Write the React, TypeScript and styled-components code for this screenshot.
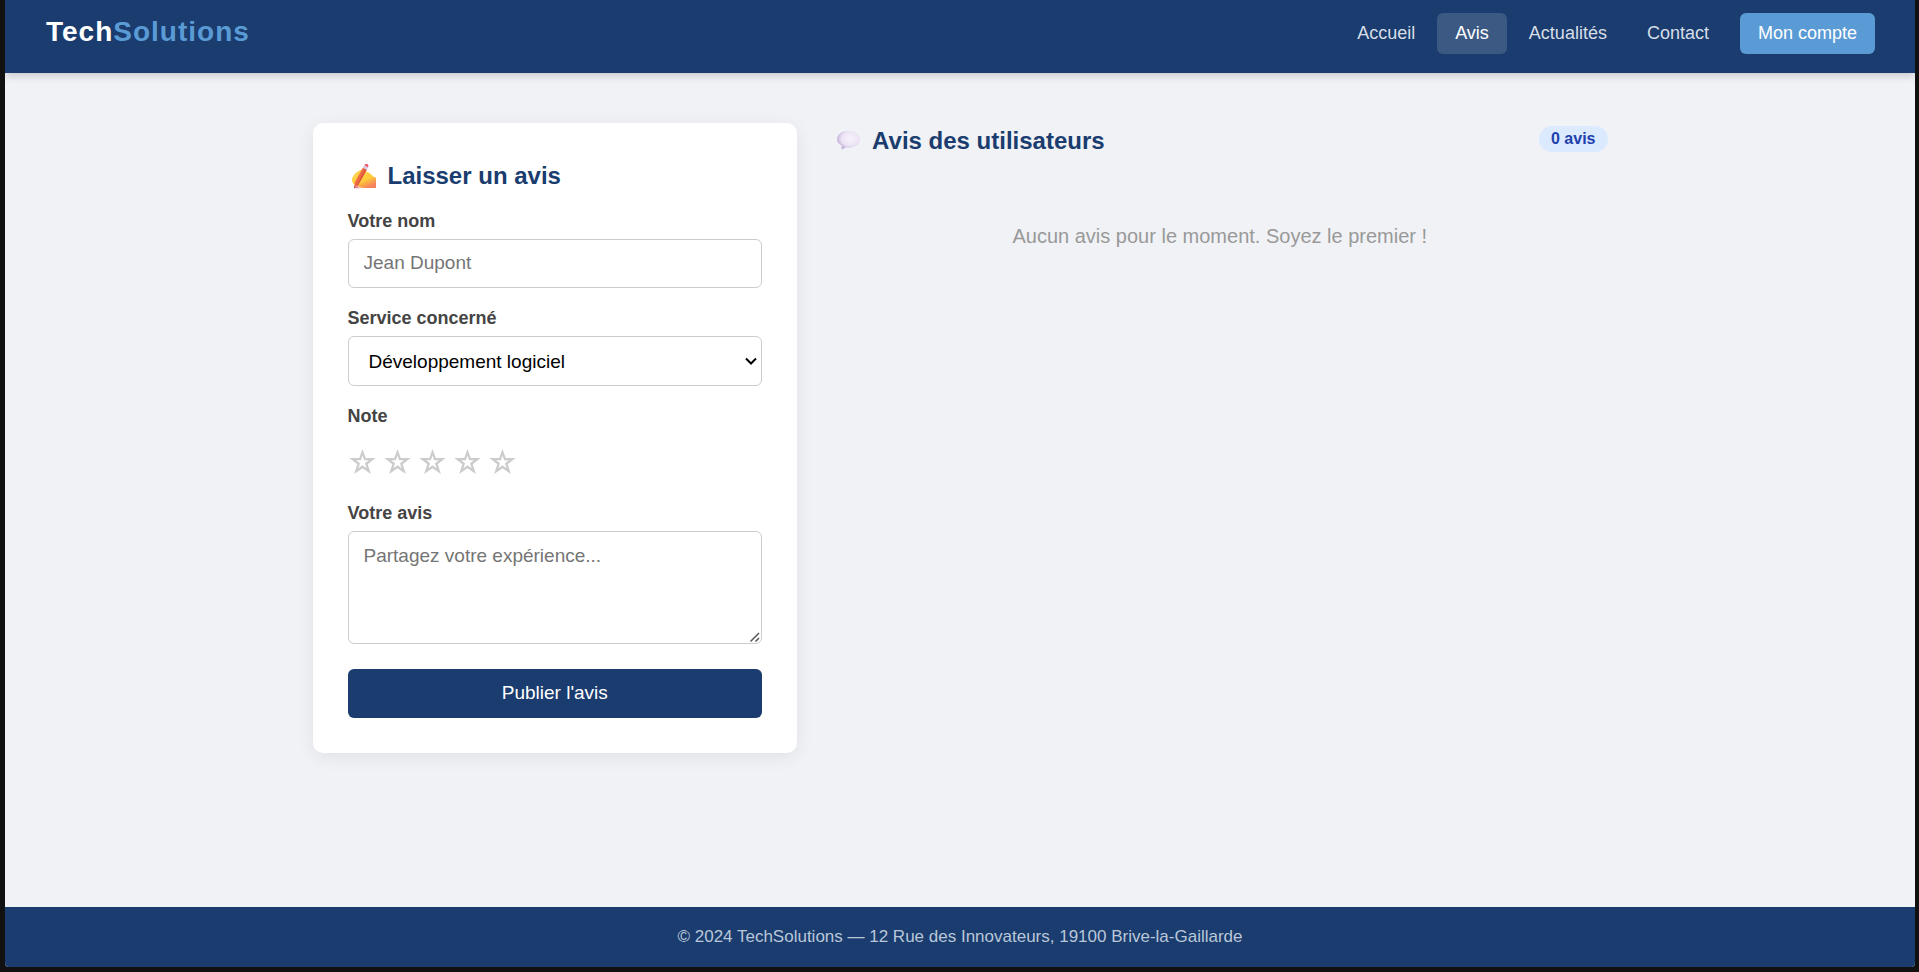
import React, { useState } from "react";
import styled, { createGlobalStyle } from "styled-components";

const navy = "#1a3c6e";
const sky = "#5b9bd5";

const GlobalStyle = createGlobalStyle`
  *, *::before, *::after { box-sizing: border-box; }
  body {
    margin: 0;
    background: #111;
    font-family: Arial, "Liberation Sans", sans-serif;
    color: #333;
  }
`;

const Frame = styled.div`
  display: flex;
  min-height: 100vh;
  padding: 0 4px 5px 5px;
`;

const Page = styled.div`
  flex: 1;
  min-width: 0;
  display: flex;
  flex-direction: column;
  background: #f0f2f6;
  border-radius: 0 0 4px 4px;
  overflow: hidden;
`;

const Header = styled.header`
  display: flex;
  flex-wrap: wrap;
  align-items: flex-start;
  justify-content: space-between;
  padding: 13px 40px 19px 41px;
  background: ${navy};
  box-shadow: 0 2px 9px rgba(0, 0, 0, 0.2);
`;

const Logo = styled.a`
  color: #fff;
  font-size: 28px;
  font-weight: 700;
  line-height: 38px;
  letter-spacing: 1px;
  text-decoration: none;
`;

const LogoAccent = styled.span`
  color: ${sky};
`;

const Nav = styled.nav`
  display: flex;
  flex-wrap: wrap;
  gap: 4px;
`;

const NavLink = styled.a<{ $active?: boolean }>`
  padding: 10px 18px;
  border-radius: 6px;
  background: ${(p) => (p.$active ? "rgba(255, 255, 255, 0.15)" : "transparent")};
  color: ${(p) => (p.$active ? "#fff" : "#d7dee8")};
  font-size: 18px;
  line-height: 21px;
  text-decoration: none;
`;

const AccountLink = styled(NavLink)`
  margin-left: 9px;
  background: ${sky};
  color: #fff;
`;

const Main = styled.main`
  flex: 1;
  display: grid;
  grid-template-columns: minmax(0, 1fr) minmax(0, 1.6fr);
  align-items: start;
  gap: 35px;
  width: 100%;
  max-width: 1365px;
  margin: 0 auto;
  padding: 50px 35px;

  @media (max-width: 900px) {
    grid-template-columns: minmax(0, 1fr);
  }
`;

const Card = styled.section`
  padding: 35px;
  border-radius: 10px;
  background: #fff;
  box-shadow: 0 4px 18px rgba(0, 0, 0, 0.07);
`;

const Title = styled.h2`
  display: flex;
  align-items: center;
  gap: 8px;
  margin: 0;
  color: ${navy};
  font-size: 24px;
  line-height: 35px;
`;

const TitleIcon = styled.svg`
  flex: none;
  width: 32px;
  height: 32px;
`;

const Form = styled.form`
  display: flex;
  flex-direction: column;
  gap: 20px;
  margin-top: 18px;
`;

const Field = styled.div`
  display: flex;
  flex-direction: column;
  gap: 7px;
`;

const Label = styled.label`
  color: #444;
  font-size: 18px;
  font-weight: 700;
  line-height: 21px;
`;

const controlStyle = `
  display: block;
  width: 100%;
  margin: 0;
  border: 1px solid #ccc;
  border-radius: 6px;
  background: #fff;
  font-family: inherit;
  font-size: 19px;
  color: #000;
  &::placeholder { color: #757575; }
`;

const TextInput = styled.input`
  ${controlStyle}
  height: 49px;
  padding: 11px 15px 13px;
`;

const ControlWrap = styled.div`
  position: relative;
`;

const Select = styled.select`
  ${controlStyle}
  appearance: none;
  height: 50px;
  padding: 12px 40px 12px 20px;
`;

const Chevron = styled.svg`
  position: absolute;
  top: 18px;
  right: 4px;
  width: 14px;
  height: 14px;
  fill: none;
  stroke: #000;
  stroke-width: 2;
  pointer-events: none;
`;

const TextArea = styled.textarea`
  ${controlStyle}
  height: 113px;
  padding: 13px 15px;
  line-height: 22px;
  resize: vertical;
  &::-webkit-resizer { background: transparent; }
`;

const Grip = styled.svg`
  position: absolute;
  right: 2px;
  bottom: 2px;
  width: 10px;
  height: 10px;
  fill: none;
  stroke: #555;
  stroke-width: 1.5;
  pointer-events: none;
`;

const RatingField = styled.fieldset`
  min-width: 0;
  margin: 0;
  padding: 0;
  border: 0;
`;

const Legend = styled.legend`
  padding: 0 0 7px;
  color: #444;
  font-size: 18px;
  font-weight: 700;
  line-height: 21px;
`;

const Stars = styled.div`
  display: flex;
  gap: 7px;
  padding: 14px 0 7px;
`;

const StarLabel = styled.label`
  position: relative;
  display: block;
  width: 28px;
  height: 28px;
  cursor: pointer;
`;

const StarInput = styled.input`
  position: absolute;
  inset: 0;
  width: 100%;
  height: 100%;
  margin: 0;
  opacity: 0;
  cursor: pointer;
`;

const StarShape = styled.svg<{ $on: boolean }>`
  display: block;
  width: 28px;
  height: 28px;
  fill: ${(p) => (p.$on ? "#f5a623" : "#ccc")};
`;

const Submit = styled.button`
  height: 49px;
  margin-top: 5px;
  padding: 0 20px 2px;
  border: 0;
  border-radius: 6px;
  background: ${navy};
  color: #fff;
  font-family: inherit;
  font-size: 19px;
  line-height: 22px;
  cursor: pointer;
`;

const ListHeader = styled.div`
  display: flex;
  align-items: flex-start;
  justify-content: space-between;
`;

const Badge = styled.span`
  margin-top: 3px;
  padding: 4px 12px;
  border-radius: 13px;
  background: #dbeafe;
  color: #1e40af;
  font-size: 16px;
  font-weight: 700;
  line-height: 18px;
`;

const Empty = styled.p`
  margin: 0;
  padding: 66px 0;
  color: #999;
  font-size: 20px;
  line-height: 24px;
  text-align: center;
`;

const Footer = styled.footer`
  padding: 20px;
  background: ${navy};
  color: #b9c7d9;
  font-size: 17px;
  line-height: 20px;
  text-align: center;
`;

const WritingHand = () => (
  <TitleIcon viewBox="0 0 32 32" aria-hidden="true">
    <defs>
      <linearGradient id="hand" x1="0" y1="0" x2="0.6" y2="1">
        <stop offset="0" stopColor="#ffd45a" />
        <stop offset="0.65" stopColor="#ffcd3a" />
        <stop offset="1" stopColor="#f5845e" />
      </linearGradient>
    </defs>
    <path
      d="M4 19.500c0-1.500 1-3.500 2.800-5.500 2.200-2.600 5.200-4.200 8-4.800 2-.4 3.300.8 2.700 2.500 2.500.3 4.600 1.300 6.300 3.200 1.200 1.400 2.500 2.300 4.200 2.700V28H15.500c-3.500 0-5.800-.8-6.500-3C6.500 25.500 3.700 22.500 4 19.500z"
      fill="url(#hand)"
    />
    <path d="M12 25.500c3.500-.2 6-1.200 7.500-3.500" fill="none" stroke="#f3a536" strokeWidth="1" />
    <path d="M15 7.500 18.800 9.700 10.200 25 6 28.300 6.800 22.500z" fill="#ee6a43" />
    <path d="M17 8.700 18.800 9.700 10.200 25 8.200 26.400z" fill="#de583c" />
    <path d="M15 7.500 16.300 5.100 20.100 7.300 18.800 9.700z" fill="#d5c8dd" />
    <path d="M16.300 5.100c.8-1.200 2-1.500 3-.9 1.100.7 1.400 1.900.8 3.100z" fill="#f8495f" />
    <path d="M6 28.300h6.500c-1.500-.5-2.800-1.400-3.200-2.500z" fill="#e987a6" />
    <path d="M6.300 26.200 7.800 27 6 28.300z" fill="#a9405a" />
  </TitleIcon>
);

const SpeechBubble = () => (
  <TitleIcon viewBox="0 0 32 32" aria-hidden="true">
    <defs>
      <radialGradient id="bubble" cx="0.58" cy="0.42" r="0.6">
        <stop offset="0" stopColor="#f8f2fb" />
        <stop offset="0.65" stopColor="#ece3f4" />
        <stop offset="1" stopColor="#bfaed6" />
      </radialGradient>
    </defs>
    <path
      d="M16.500 6C23 6 28 9.500 28 14.300s-5 8.200-11.200 8.200c-1 0-1.900-.1-2.800-.2-1.300 1.100-2.800 1.800-4.800 1.900.6-.9.700-2.600.2-4C6.800 19.200 5 17 5 14.300 5 9.500 10 6 16.500 6z"
      fill="url(#bubble)"
    />
  </TitleIcon>
);

const App = () => {
  const [rating, setRating] = useState(0);

  return (
    <>
      <GlobalStyle />
      <Frame>
        <Page>
          <Header>
            <Logo href="#">
              Tech<LogoAccent>Solutions</LogoAccent>
            </Logo>
            <Nav aria-label="Navigation principale">
              <NavLink href="#accueil">Accueil</NavLink>
              <NavLink href="#avis" $active aria-current="page">
                Avis
              </NavLink>
              <NavLink href="#actualites">Actualités</NavLink>
              <NavLink href="#contact">Contact</NavLink>
              <AccountLink href="#compte">Mon compte</AccountLink>
            </Nav>
          </Header>

          <Main>
            <Card>
              <Title>
                <WritingHand />
                Laisser un avis
              </Title>
              <Form onSubmit={(e) => e.preventDefault()}>
                <Field>
                  <Label htmlFor="nom">Votre nom</Label>
                  <TextInput id="nom" type="text" placeholder="Jean Dupont" />
                </Field>
                <Field>
                  <Label htmlFor="service">Service concerné</Label>
                  <ControlWrap>
                    <Select id="service">
                      <option>Développement logiciel</option>
                    </Select>
                    <Chevron viewBox="0 0 14 14" aria-hidden="true">
                      <path d="M2 4.500 7 9.500 12 4.500" />
                    </Chevron>
                  </ControlWrap>
                </Field>
                <RatingField>
                  <Legend>Note</Legend>
                  <Stars>
                    {[1, 2, 3, 4, 5].map((n) => (
                      <StarLabel key={n}>
                        <StarInput
                          type="radio"
                          name="note"
                          value={n}
                          aria-label={`${n} sur 5`}
                          checked={rating === n}
                          onChange={() => setRating(n)}
                        />
                        <StarShape viewBox="0 0 28 28" $on={n <= rating} aria-hidden="true">
                          <path
                            fillRule="evenodd"
                            d="M14.500 1 17.700 10H27.700L19.700 16.200 22.900 26 14.500 20.200 6.100 26 9.300 16.200 1.300 10H11.300zM14.500 7.600 12.900 12.200H8.200L12 15.200 10.400 20.200 14.500 17.300 18.600 20.200 17 15.200 20.800 12.200H16.100z"
                          />
                        </StarShape>
                      </StarLabel>
                    ))}
                  </Stars>
                </RatingField>
                <Field>
                  <Label htmlFor="avis">Votre avis</Label>
                  <ControlWrap>
                    <TextArea id="avis" placeholder="Partagez votre expérience..." />
                    <Grip viewBox="0 0 10 10" aria-hidden="true">
                      <path d="M0.500 9.500 9 1M5.500 9.500 9 6" />
                    </Grip>
                  </ControlWrap>
                </Field>
                <Submit type="submit">Publier l'avis</Submit>
              </Form>
            </Card>

            <section>
              <ListHeader>
                <Title>
                  <SpeechBubble />
                  Avis des utilisateurs
                </Title>
                <Badge>0 avis</Badge>
              </ListHeader>
              <Empty>Aucun avis pour le moment. Soyez le premier !</Empty>
            </section>
          </Main>

          <Footer>© 2024 TechSolutions — 12 Rue des Innovateurs, 19100 Brive-la-Gaillarde</Footer>
        </Page>
      </Frame>
    </>
  );
};

export default App;
